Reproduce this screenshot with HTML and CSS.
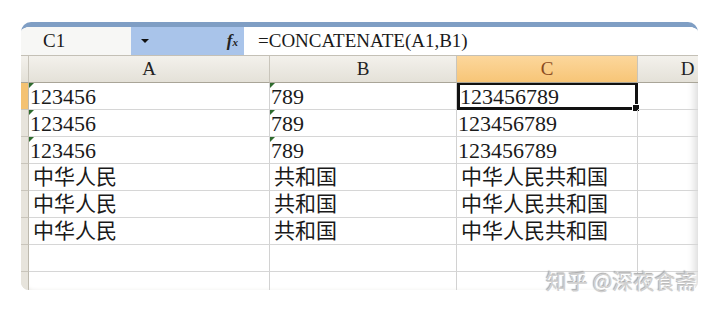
FILE: index.html
```html
<!DOCTYPE html>
<html lang="zh-CN">
<head>
    <meta charset="UTF-8">
    <title>CONCATENATE</title>
    <link rel="stylesheet" href="styles.css">
</head>
<body>
    <div class="page">
        <div class="sheet">
            <div class="formula-bar">
                <div class="name-box">C1</div>
                <div class="name-drop">
                    <span class="arrow"></span>
                    <span class="fx"><i>f</i><small>x</small></span>
                </div>
                <div class="formula">=CONCATENATE(A1,B1)</div>
            </div>

            <div class="grid">
                <div class="hd corner"></div>
                <div class="hd">A</div>
                <div class="hd">B</div>
                <div class="hd active">C</div>
                <div class="hd">D</div>

                <div class="rh active"></div>
                <div class="cell flag">123456</div>
                <div class="cell flag">789</div>
                <div class="cell selected">123456789</div>
                <div class="cell"></div>

                <div class="rh"></div>
                <div class="cell flag">123456</div>
                <div class="cell flag">789</div>
                <div class="cell">123456789</div>
                <div class="cell"></div>

                <div class="rh"></div>
                <div class="cell flag">123456</div>
                <div class="cell flag">789</div>
                <div class="cell">123456789</div>
                <div class="cell"></div>

                <div class="rh"></div>
                <div class="cell cjk">中华人民</div>
                <div class="cell cjk">共和国</div>
                <div class="cell cjk">中华人民共和国</div>
                <div class="cell"></div>

                <div class="rh"></div>
                <div class="cell cjk">中华人民</div>
                <div class="cell cjk">共和国</div>
                <div class="cell cjk">中华人民共和国</div>
                <div class="cell"></div>

                <div class="rh"></div>
                <div class="cell cjk">中华人民</div>
                <div class="cell cjk">共和国</div>
                <div class="cell cjk">中华人民共和国</div>
                <div class="cell"></div>

                <div class="rh"></div>
                <div class="cell"></div>
                <div class="cell"></div>
                <div class="cell"></div>
                <div class="cell"></div>

                <div class="rh"></div>
                <div class="cell"></div>
                <div class="cell"></div>
                <div class="cell"></div>
                <div class="cell"></div>
            </div>
        </div>

        <div class="watermark">知乎 @深夜食斋</div>
    </div>
</body>
</html>
```

FILE: styles.css
```css
body {
    margin: 0;
    background: #fff;
    font-family: "Liberation Serif", "Noto Sans CJK SC", serif;
    color: #1a1a1a;
}
.page {
    position: relative;
    width: 720px;
    height: 312px;
    padding-top: 22px;
    box-sizing: border-box;
}
.sheet {
    width: 677px;
    height: 263px;
    margin-left: 21px;
    border-top: 5px solid #7f9ec4;
    border-radius: 10px 10px 8px 8px;
    overflow: hidden;
    background: #fff;
    box-shadow: inset 6px 0 6px -4px #d6d3cc, inset -8px 0 8px -5px #d9d9d9;
}

/* formula bar */
.formula-bar {
    display: flex;
    height: 28px;
    border-bottom: 1px solid #c4c0b6;
    background: linear-gradient(#fbfbfb, #f1f1f1);
    font-size: 19px;
    line-height: 28px;
}
.name-box {
    width: 88px;
    padding-left: 22px;
    background: #f7f7f5;
}
.name-drop {
    display: flex;
    align-items: center;
    justify-content: space-between;
    width: 113px;
    padding: 0 6px 0 10px;
    box-sizing: border-box;
    background: #a9c4ea;
}
.arrow {
    width: 0;
    height: 0;
    border-left: 4px solid transparent;
    border-right: 4px solid transparent;
    border-top: 4px solid #111;
}
.fx {
    font-size: 17px;
    font-weight: bold;
    color: #222;
}
.fx small {
    font-size: 11px;
    font-style: italic;
}
.formula {
    flex: 1;
    padding-left: 14px;
    background: #fff;
}

/* grid */
.grid {
    display: grid;
    grid-template-columns: 8px 241px 187px 181px 100px;
    grid-auto-rows: 27px;
}
.hd {
    background: linear-gradient(#f3f1ec, #e4e1d8);
    border-right: 1px solid #c9c5bb;
    border-bottom: 1px solid #a9a598;
    text-align: center;
    font-size: 19px;
    line-height: 26px;
    color: #222;
}
.hd.active {
    background: linear-gradient(#fcd79c, #f7c577);
    color: #8a4a1e;
}
.rh {
    background: #e7e4dc;
    border-right: 1px solid #bdb9ae;
    border-bottom: 1px solid #c9c5bb;
}
.rh.active {
    background: #f4c272;
}
.cell {
    position: relative;
    border-right: 1px solid #d2d2d2;
    border-bottom: 1px solid #d6d6d6;
    padding-left: 1px;
    font-size: 22px;
    line-height: 28px;
    white-space: nowrap;
}
.cjk {
    padding-left: 4px;
    font-size: 21px;
    line-height: 26px;
}
.flag::before {
    content: "";
    position: absolute;
    top: 0;
    left: 0;
    border-top: 5px solid #2e6b2e;
    border-right: 5px solid transparent;
}
.selected {
    box-sizing: border-box;
    border: 3px solid #111;
    border-top-width: 2px;
    padding-left: 0;
    line-height: 24px;
}
.selected::after {
    content: "";
    position: absolute;
    right: -5px;
    bottom: -5px;
    width: 6px;
    height: 6px;
    background: #111;
    border: 1px solid #fff;
}

.watermark {
    position: absolute;
    left: 546px;
    top: 267px;
    font-family: "Noto Sans CJK SC", sans-serif;
    font-size: 21px;
    line-height: 26px;
    color: #d0d0d0;
    text-shadow: 1px 1px 0 #fff, -1px -1px 1px #a8a8a8;
}
```
